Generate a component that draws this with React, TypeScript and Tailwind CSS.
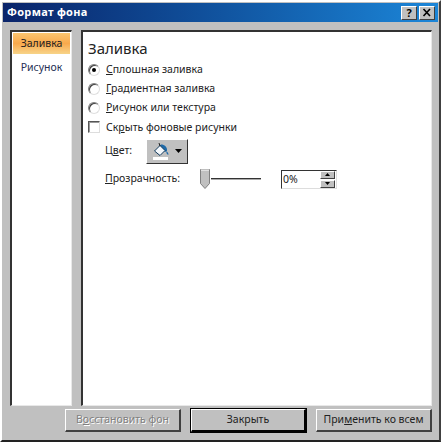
const font = "font-['Noto_Sans','Liberation_Sans',sans-serif]";

function Radio({ checked }: { checked?: boolean }) {
  return (
    <span className="relative block h-3 w-3 rounded-full border border-t-[#808080] border-l-[#808080] border-r-[#dfdfdf] border-b-[#dfdfdf] bg-white shadow-[inset_1px_1px_0_#404040]">
      {checked && <span className="absolute left-[3px] top-[3px] h-1 w-1 rounded-full bg-black" />}
    </span>
  );
}

function Option({ u, rest, checked }: { u: string; rest: string; checked?: boolean }) {
  return (
    <div className="flex h-[19px] items-center">
      <span className="flex w-[23px] justify-start pl-[5px]">
        <Radio checked={checked} />
      </span>
      <span className="text-[10.5px] leading-none text-[#222]">
        <span className="underline">{u}</span>
        {rest}
      </span>
    </div>
  );
}

function Button({ children, dim, strong, width }: { children: React.ReactNode; dim?: boolean; strong?: boolean; width: string }) {
  return (
    <div
      className={`flex h-[23px] items-center justify-center border-t border-l border-t-white border-l-white border-r-2 border-b-2 text-[10.5px] ${width} ${
        strong ? 'border-r-black border-b-black outline outline-1 outline-black' : 'border-r-[#404040] border-b-[#404040]'
      } ${dim ? 'text-[#808080] [text-shadow:1px_1px_0_#fff]' : 'text-[#222]'}`}
    >
      {children}
    </div>
  );
}

export default function App() {
  return (
    <div className={`flex h-[442px] w-[441px] flex-col border-t-2 border-l-2 border-t-white border-l-white border-r-2 border-b-2 border-r-[#404040] border-b-[#222] bg-[#c0c0c0] ${font}`}>
      <div className="mx-px mt-px flex h-[19px] items-center justify-between bg-gradient-to-r from-[#0a246a] to-[#1c86d8] pl-[4px] pr-[3px]">
        <span className="text-[11px] font-bold tracking-[0.3px] text-white">Формат фона</span>
        <div className="flex gap-[2px]">
          <span className="flex h-[14px] w-4 items-center justify-center border-t border-l border-t-white border-l-white border-r border-b border-r-[#404040] border-b-[#404040] bg-[#c0c0c0] text-[11px] font-bold leading-none text-black">?</span>
          <span className="flex h-[14px] w-4 items-center justify-center border-t border-l border-t-white border-l-white border-r border-b border-r-[#404040] border-b-[#404040] bg-[#c0c0c0]">
            <svg width="10" height="9" viewBox="0 0 10 9"><path d="M1.500 1 8 8M8 1 1.500 8" stroke="#000" strokeWidth="1.6" /></svg>
          </span>
        </div>
      </div>

      <div className="mt-[8px] flex h-[376px] gap-[9px] pl-2 pr-[7px]">
        <div className="flex w-[62px] flex-col border-t-2 border-l-2 border-t-[#333] border-l-[#333] border-r border-b border-r-[#e8e8e8] border-b-[#e8e8e8] bg-white pt-px pl-px pr-px">
          <div className="flex h-[21px] items-center justify-center bg-gradient-to-b from-[#fbc56f] via-[#f8a94c] to-[#f7d488] text-[10.5px] text-[#222]">Заливка</div>
          <div className="flex h-[28px] items-center justify-center text-[10.5px] text-[#252f55]">Рисунок</div>
        </div>
        <div className="flex flex-1 flex-col border-t-2 border-l-2 border-t-[#333] border-l-[#333] border-r border-b border-r-[#e8e8e8] border-b-[#e8e8e8] bg-white pt-[6px]">
          <div className="pl-[5px] text-[15px] leading-[20px] text-[#222]">Заливка</div>
          <div className="mt-[2px] flex flex-col">
            <Option u="С" rest="плошная заливка" checked />
            <Option u="Г" rest="радиентная заливка" />
            <Option u="Р" rest="исунок или текстура" />
            <div className="flex h-[20px] items-center">
              <span className="flex w-[23px] pl-[5px]">
                <span className="block h-3 w-3 border-t border-l border-t-[#555] border-l-[#555] border-r border-b border-r-[#ddd] border-b-[#ddd] shadow-[inset_1px_1px_0_#999]" />
              </span>
              <span className="text-[10.5px] leading-none text-[#222]">
                Ск<span className="underline">р</span>ыть фоновые рисунки
              </span>
            </div>
          </div>
          <div className="mt-px flex h-[26px] items-center pl-[22px]">
            <span className="w-[41px] text-[10.5px] text-[#222]">
              Ц<span className="underline">в</span>ет:
            </span>
            <div className="flex h-[25px] w-[42px] items-center justify-center gap-[5px] border-t border-l border-t-white border-l-white border-r border-b border-r-[#333] border-b-[#333] bg-[#c0c0c0]">
              <svg width="17" height="17" viewBox="0 0 17 17">
                <path d="M8 1.500c3.500 0 6.500 2.500 6 6.500l-2 1L6 3z" fill="#1f6aa8" />
                <path d="M1.500 8 7 2.500l5 5-5 5z" fill="#f4f8fc" stroke="#123a5c" strokeWidth="1" />
                <path d="M7 3 6 0" stroke="#222" strokeWidth="1" />
                <path d="M13.500 8c1.200 1.200 2 2.500 2 3.800-1.500 0-2.500-1.800-2-3.800z" fill="#1f6aa8" />
                <rect x="0" y="14" width="15" height="3" fill="#fff" />
              </svg>
              <svg width="7" height="4" viewBox="0 0 7 4"><path d="M0 0h7L3.500 4z" fill="#000" /></svg>
            </div>
          </div>
          <div className="mt-[4px] flex h-[22px] items-center pl-[22px]">
            <span className="w-[95px] text-[10.5px] text-[#222]">
              <span className="underline">П</span>розрачность:
            </span>
            <div className="flex w-[61px] items-center">
              <svg width="11" height="20" viewBox="0 0 11 20" className="shrink-0">
                <path d="M.5.500h9v14l-4.500 5-4.500-5z" fill="#c0c0c0" stroke="#808080" />
                <path d="M1 1h8" stroke="#fff" />
              </svg>
              <span className="h-[2px] flex-1 border-b border-b-[#aaa] bg-[#333]" />
            </div>
            <div className="ml-[20px] flex h-[19px] w-[56px] items-center justify-between border-t border-l border-t-[#333] border-l-[#333] border-r border-b border-r-[#ddd] border-b-[#ddd] pl-px pr-px">
              <span className="text-[10.5px] leading-none text-[#222]">0%</span>
              <span className="flex flex-col gap-px">
                <span className="flex h-2 w-[15px] items-center justify-center border-t border-l border-t-white border-l-white border-r border-b border-r-[#404040] border-b-[#404040] bg-[#c0c0c0]">
                  <svg width="5" height="3" viewBox="0 0 5 3"><path d="M2.500 0 5 3H0z" /></svg>
                </span>
                <span className="flex h-2 w-[15px] items-center justify-center border-t border-l border-t-white border-l-white border-r border-b border-r-[#404040] border-b-[#404040] bg-[#c0c0c0]">
                  <svg width="5" height="3" viewBox="0 0 5 3"><path d="M0 0h5L2.500 3z" /></svg>
                </span>
              </span>
            </div>
          </div>
        </div>
      </div>

      <div className="mt-[3px] flex justify-end gap-[10px] pr-[7px]">
        <Button dim width="w-[116px]">
          <span>В<span className="underline">о</span>сстановить фон</span>
        </Button>
        <Button strong width="w-[115px]">Закрыть</Button>
        <Button width="w-[116px]">
          <span>При<span className="underline">м</span>енить ко всем</span>
        </Button>
      </div>
    </div>
  );
}
